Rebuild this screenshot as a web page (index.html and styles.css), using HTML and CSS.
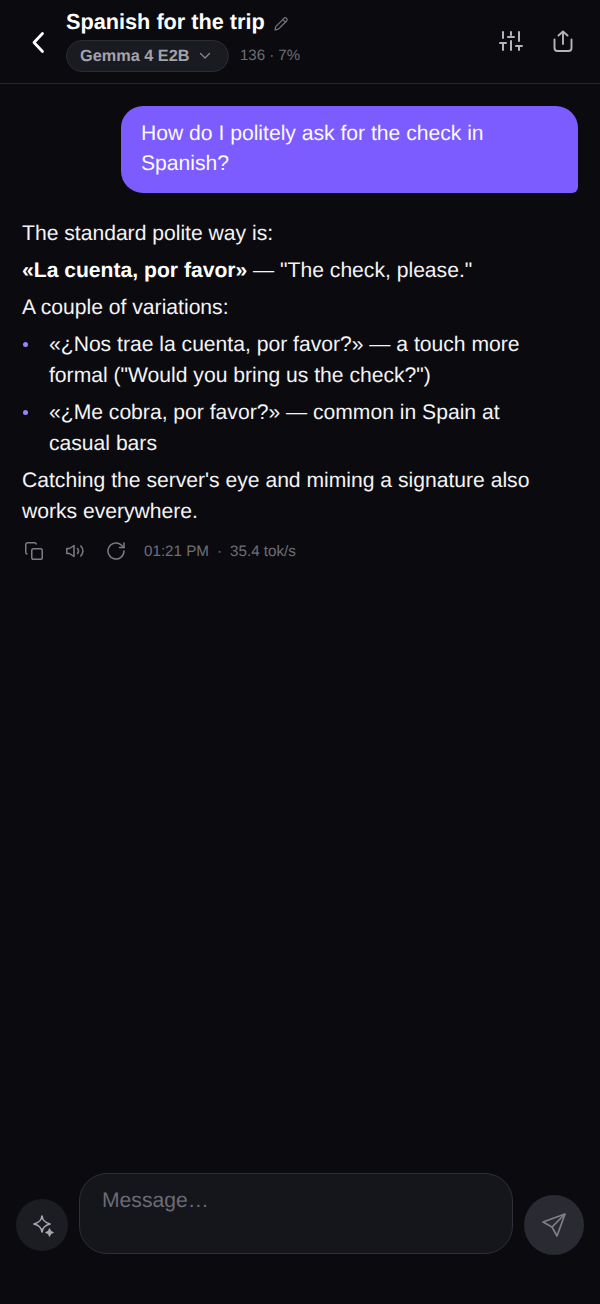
FILE: index.html
```html
<!DOCTYPE html>
<html lang="en">
<head>
    <meta charset="UTF-8">
    <meta name="viewport" content="width=device-width, initial-scale=1.0">
    <title>Spanish for the trip</title>
    <link rel="stylesheet" href="styles.css">
</head>
<body>
<div class="app">
    <!-- Header -->
    <header class="topbar">
        <button class="back" aria-label="Back">
            <svg width="14" height="24" viewBox="0 0 14 24" fill="none" stroke="#fff" stroke-width="2.8" stroke-linecap="round" stroke-linejoin="round"><path d="M10.500 3.500 L2 12.500 L10.500 21.500"/></svg>
        </button>
        <div class="heading">
            <div class="title-row">
                <h1>Spanish for the trip</h1>
                <svg class="edit" width="16" height="16" viewBox="0 0 16 16" fill="none" stroke="#77777f" stroke-width="1.2" stroke-linejoin="round"><path d="M2 14 L2.8 10.6 L10.9 2.4 A1.8 1.8 0 0 1 13.6 5 L5.4 13.2 Z"/><path d="M9.8 3.6 L12.4 6.2"/></svg>
            </div>
            <div class="model-row">
                <div class="model-pill">
                    <span>Gemma 4 E2B</span>
                    <svg width="12" height="8" viewBox="0 0 12 8" fill="none" stroke="#85858e" stroke-width="1.3" stroke-linecap="round" stroke-linejoin="round"><path d="M1.5 1.5 L6 6 L10.5 1.5"/></svg>
                </div>
                <span class="usage">136 · 7%</span>
            </div>
        </div>
        <div class="actions">
            <svg width="24" height="20" viewBox="0 0 24 20" fill="none" stroke="#b4b4bb" stroke-width="2" stroke-linecap="round"><path d="M4 1 V7 M4 13 V19 M12 1 V4 M12 10 V19 M20 1 V10 M20 16 V19 M1 12 H7 M9 6 H15 M17 15 H23"/></svg>
            <svg width="20" height="22" viewBox="0 0 20 22" fill="none" stroke="#b4b4bb" stroke-width="1.9" stroke-linecap="round" stroke-linejoin="round"><path d="M10 14 V1.500 M5.500 5.500 L10 1.500 L14.500 5.500"/><path d="M1.500 9.500 V18 A3 3 0 0 0 4.500 21 H15.500 A3 3 0 0 0 18.500 18 V9.500"/></svg>
        </div>
    </header>

    <!-- Messages -->
    <main class="messages">
        <div class="bubble">How do I politely ask for the check in Spanish?</div>
        <div class="reply">
            <p>The standard polite way is:</p>
            <p><strong>«La cuenta, por favor»</strong> — "The check, please."</p>
            <p>A couple of variations:</p>
            <ul>
                <li>«¿Nos trae la cuenta, por favor?» — a touch more formal ("Would you bring us the check?")</li>
                <li>«¿Me cobra, por favor?» — common in Spain at casual bars</li>
            </ul>
            <p>Catching the server's eye and miming a signature also works everywhere.</p>
        </div>
        <div class="meta">
            <svg width="20" height="18" viewBox="0 0 20 18" fill="none" stroke="#7c7c85" stroke-width="1.5" stroke-linejoin="round"><rect x="7.750" y="6.750" width="10.500" height="10.500" rx="1.800"/><path d="M3.500 12 A1.800 1.800 0 0 1 1.750 10.200 V2.600 A1.800 1.800 0 0 1 3.500 0.800 H10.500 A1.800 1.800 0 0 1 12.300 2.600"/></svg>
            <svg width="20" height="18" viewBox="0 0 20 18" fill="none" stroke="#7c7c85" stroke-width="1.5" stroke-linecap="round" stroke-linejoin="round"><path d="M1.800 6.500 H4.500 L9 3.500 V14.500 L4.500 11.500 H1.800 Z"/><path d="M12.500 6.500 A3.500 3.500 0 0 1 12.500 11.500"/><path d="M15.800 4 A7 7 0 0 1 15.800 14"/></svg>
            <svg width="20" height="18" viewBox="0 0 20 18" fill="none" stroke="#7c7c85" stroke-width="1.500" stroke-linecap="round" stroke-linejoin="round"><path d="M18 9 A8 8 0 1 1 15.300 3 L18 5.500"/><path d="M18 1 V5.500 H13.500"/></svg>
            <span class="stats">01:21 PM<span class="dot">·</span>35.4 tok/s</span>
        </div>
    </main>

    <!-- Composer -->
    <footer class="composer">
        <button class="spark" aria-label="Suggestions">
            <svg width="24" height="26" viewBox="0 0 24 26" fill="none" stroke="#a9a9b1" stroke-width="1.7" stroke-linejoin="round"><path d="M12 4 C12.600 8.500 14.500 10.500 20 12 C14.500 13.500 12.600 15.500 12 20 C11.400 15.500 9.500 13.500 4 12 C9.500 10.500 11.400 8.500 12 4 Z"/><path d="M19.500 16.500 L20.800 19.200 L23.500 20.500 L20.800 21.800 L19.500 24.500 L18.200 21.800 L15.500 20.500 L18.200 19.200 Z" fill="#a9a9b1" stroke-width="0.8"/></svg>
        </button>
        <div class="input">Message…</div>
        <button class="send" aria-label="Send">
            <svg width="26" height="26" viewBox="0 0 26 26" fill="none" stroke="#7f7f88" stroke-width="1.7" stroke-linejoin="round"><path d="M24 2 L2 10 L11 15 L16 24 Z"/><path d="M11 15 L24 2"/></svg>
        </button>
    </footer>
</div>
</body>
</html>
```

FILE: styles.css
```css
* {
    box-sizing: border-box;
}
html, body {
    height: 100%;
}
body {
    font-family: "Liberation Sans", Arial, sans-serif;
    background-color: #0b0b0f;
    color: #f4f4f6;
    margin: 0;
    text-rendering: geometricPrecision;
}
button {
    border: none;
    padding: 0;
    background: none;
    display: flex;
    align-items: center;
    justify-content: center;
}
.app {
    height: 1304px;
    display: flex;
    flex-direction: column;
}

/* header */
.topbar {
    height: 84px;
    flex-shrink: 0;
    display: flex;
    align-items: center;
    padding: 0 27px 0 32px;
    border-bottom: 1px solid #26262b;
}
.back {
    width: 14px;
    height: 24px;
    margin-right: 20px;
}
.heading {
    flex: 1;
    display: flex;
    flex-direction: column;
    gap: 4px;
    margin-top: -3px;
}
.title-row {
    display: flex;
    align-items: center;
    gap: 8px;
}
h1 {
    margin: 0;
    font-size: 21.7px;
    line-height: 28px;
    font-weight: 700;
    color: #fff;
}
.edit {
    margin-top: 4px;
}
.model-row {
    display: flex;
    align-items: center;
    gap: 11px;
}
.model-pill {
    height: 32px;
    width: 163px;
    display: flex;
    align-items: center;
    gap: 9px;
    padding-left: 13px;
    border-radius: 16px;
    background-color: #1a1a21;
    border: 1px solid #2b2b33;
    font-size: 16.3px;
    font-weight: 700;
    color: #a3a3ab;
}
.usage {
    font-size: 15px;
    color: #6e6e77;
    margin-bottom: 1px;
}
.actions {
    display: flex;
    align-items: center;
    gap: 30px;
    margin-top: -1px;
}

/* messages */
.messages {
    flex: 1;
    padding: 22px 22px 0;
}
.bubble {
    width: 457px;
    margin-left: auto;
    padding: 13px 20px 14px;
    background-color: #7c5cff;
    color: #fbfaff;
    border-radius: 22px 22px 6px 22px;
    font-size: 21.12px;
    line-height: 30px;
}
.reply {
    margin-top: 25px;
    padding-right: 30px;
    font-size: 21.12px;
    line-height: 31px;
}
.reply p {
    margin: 0 0 6px;
}
.reply strong {
    color: #fff;
}
.reply ul {
    list-style: none;
    margin: 0 0 6px;
    padding: 0;
}
.reply li {
    position: relative;
    padding-left: 27px;
    margin-bottom: 6px;
}
.reply li::before {
    content: "";
    position: absolute;
    left: 1px;
    top: 13px;
    width: 5px;
    height: 5px;
    border-radius: 50%;
    background-color: #9b82ff;
}
.meta {
    display: flex;
    align-items: center;
    margin-top: 15px;
    padding-left: 2px;
    gap: 21px;
}
.stats {
    margin-left: -3px;
    font-size: 15.2px;
    color: #6e6e77;
}
.dot {
    margin: 0 8px;
}

/* composer */
.composer {
    flex-shrink: 0;
    display: flex;
    align-items: flex-end;
    gap: 11px;
    padding: 0 16px 49px;
}
.spark {
    width: 52px;
    height: 52px;
    margin-bottom: 4px;
    border-radius: 50%;
    background-color: #1c1c23;
}
.input {
    width: 434px;
    height: 81px;
    margin-bottom: 1px;
    padding: 13px 22px;
    border-radius: 28px;
    background-color: #15151c;
    border: 1px solid #2f2f37;
    font-size: 21.12px;
    line-height: 28px;
    color: #6b6b75;
}
.send {
    width: 60px;
    height: 60px;
    border-radius: 50%;
    background-color: #2a2a33;
}
```
